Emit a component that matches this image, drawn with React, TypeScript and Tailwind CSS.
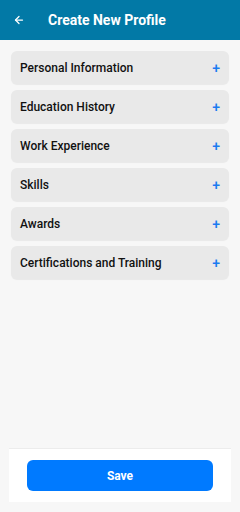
import { ArrowLeft } from "lucide-react";

const sections = [
  "Personal Information",
  "Education History",
  "Work Experience",
  "Skills",
  "Awards",
  "Certifications and Training",
];

export default function App() {
  return (
    <div className="h-[512px] w-[240px] flex flex-col bg-[#f7f7f7] font-['Roboto',sans-serif]">
      <header className="h-10 shrink-0 bg-[#0279a6] flex items-center px-[13px] gap-[23px] text-white">
        <ArrowLeft size={12} strokeWidth={2.5} />
        <h1 className="text-[14px] font-bold">Create New Profile</h1>
      </header>

      <div className="flex-1 flex flex-col gap-[6px] px-[11px] pt-[11px]">
        {sections.map((s) => (
          <button
            key={s}
            className="h-[33px] rounded-md bg-[#e9e9e9] flex items-center justify-between pl-[9px] pr-[9px] shadow-[0_1px_1px_rgba(0,0,0,0.06)]"
          >
            <span className="text-[12px] font-medium text-[#111]">{s}</span>
            <span className="text-[14px] font-medium text-[#1a7bf0] leading-none">+</span>
          </button>
        ))}
      </div>

      <div className="mx-[9px] mb-[10px] bg-white h-[54px] flex items-center justify-center border-t border-[#ececec]">
        <button className="w-[186px] h-[31px] rounded-md bg-[#007aff] text-white text-[12px] font-bold">
          Save
        </button>
      </div>
    </div>
  );
}
